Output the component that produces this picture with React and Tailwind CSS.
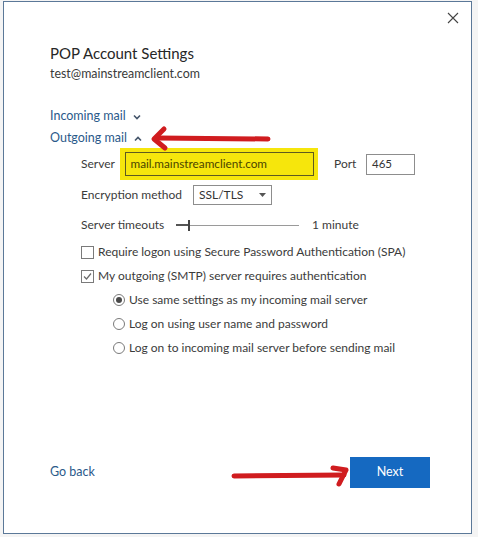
import React from "react";

const font = { fontFamily: 'Lato, "Open Sans", sans-serif' };

function ChevronDown() {
  return (
    <svg width="8" height="6" viewBox="0 0 8 6" className="ml-[7px] mt-[1px]">
      <polyline points="1,1.5 4,4.5 7,1.5" fill="none" stroke="#44546a" strokeWidth="1.6" />
    </svg>
  );
}
function ChevronUp() {
  return (
    <svg width="8" height="6" viewBox="0 0 8 6" className="ml-[7px] mt-[1px]">
      <polyline points="1,4.5 4,1.5 7,4.5" fill="none" stroke="#44546a" strokeWidth="1.6" />
    </svg>
  );
}

function Checkbox({ checked }) {
  return (
    <span className="w-[13px] h-[13px] border border-[#7a7a7a] bg-white flex items-center justify-center shrink-0">
      {checked && (
        <svg width="11" height="11" viewBox="0 0 11 11">
          <polyline points="2,5.5 4.5,8 9,2.5" fill="none" stroke="#6a6a6a" strokeWidth="1.2" />
        </svg>
      )}
    </span>
  );
}

function Radio({ checked }) {
  return (
    <span className="w-[12px] h-[12px] rounded-full border border-[#7a7a7a] bg-white flex items-center justify-center shrink-0">
      {checked && <span className="w-[6px] h-[6px] rounded-full bg-[#4a4a4a]" />}
    </span>
  );
}

export default function App() {
  return (
    <div className="w-[478px] h-[537px] bg-[#f4f4f4] overflow-hidden relative whitespace-nowrap" style={font}>
      <div className="ml-[3px] mt-[1px] w-[469px] h-[533px] border border-[#5b7898] bg-white flex flex-col relative text-[12px] text-[#3b3b3b]">
        {/* close */}
        <div className="flex justify-end pr-[12px] pt-[10px] h-[30px]">
          <svg width="12" height="12" viewBox="0 0 12 12">
            <path d="M1 1 L11 11 M11 1 L1 11" stroke="#444" strokeWidth="1.1" fill="none" />
          </svg>
        </div>

        <div className="pl-[46px] flex flex-col">
          <div className="h-[22px] mt-[10px] flex items-center text-[15px] text-[#262626]">POP Account Settings</div>
          <div className="h-[20px] flex items-center text-[12.4px] text-[#3a3a3a]">test@mainstreamclient.com</div>

          <div className="h-[22px] mt-[21px] flex items-center text-[12.5px] text-[#2b5a8a]">
            Incoming mail
            <ChevronDown />
          </div>
          <div className="h-[19px] mt-[2px] flex items-center text-[12.5px] text-[#2b5a8a]">
            Outgoing mail
            <ChevronUp />
          </div>

          <div className="pl-[31px] flex flex-col">
            {/* server */}
            <div className="h-[32px] flex items-center">
              <span className="w-[39px]">Server</span>
              <div className="w-[198px] h-[32px] bg-[#f6e60c] flex items-center justify-center">
                <div className="w-[189px] h-[24px] border border-[#5e5a20] flex items-center pl-[5px] text-[11.75px] text-[#4a4300]">
                  mail.mainstreamclient.com
                </div>
              </div>
              <span className="ml-[16px] w-[32px]">Port</span>
              <div className="w-[49px] h-[21px] border border-[#8d8d8d] flex items-center pl-[5px] text-[11.5px] text-[#333]">465</div>
            </div>

            {/* encryption */}
            <div className="h-[20px] mt-[5px] flex items-center">
              <span className="w-[112px]">Encryption method</span>
              <div className="w-[79px] h-[20px] border border-[#8d8d8d] flex items-center justify-between pl-[5px] pr-[5px] text-[#333]">
                <span>SSL/TLS</span>
                <svg width="7" height="4" viewBox="0 0 7 4"><polygon points="0,0 7,0 3.5,4" fill="#555" /></svg>
              </div>
            </div>

            {/* timeouts */}
            <div className="h-[20px] mt-[10px] flex items-center">
              <span className="w-[95px]">Server timeouts</span>
              <div className="w-[123px] h-[12px] flex items-center relative">
                <div className="w-[12px] h-[2px] bg-[#555]" />
                <div className="w-[2px] h-[11px] bg-[#444]" />
                <div className="flex-1 h-[1px] bg-[#9a9a9a]" />
              </div>
              <span className="ml-[13px]">1 minute</span>
            </div>

            <div className="h-[24px] mt-[5px] flex items-center">
              <Checkbox />
              <span className="ml-[4px]">Require logon using Secure Password Authentication (SPA)</span>
            </div>
            <div className="h-[24px] flex items-center">
              <Checkbox checked />
              <span className="ml-[4px]">My outgoing (SMTP) server requires authentication</span>
            </div>

            <div className="pl-[32px] flex flex-col">
              <div className="h-[24px] flex items-center">
                <Radio checked />
                <span className="ml-[4px]">Use same settings as my incoming mail server</span>
              </div>
              <div className="h-[24px] flex items-center">
                <Radio />
                <span className="ml-[4px]">Log on using user name and password</span>
              </div>
              <div className="h-[24px] flex items-center">
                <Radio />
                <span className="ml-[4px]">Log on to incoming mail server before sending mail</span>
              </div>
            </div>
          </div>
        </div>

        <div className="flex-1" />

        <div className="flex items-center justify-between pl-[46px] pr-[41px] pb-[45px]">
          <span className="text-[12.5px] text-[#2b5a8a]">Go back</span>
          <div className="w-[80px] h-[31px] bg-[#1569c1] text-white flex items-center justify-center text-[12.5px]">Next</div>
        </div>

        {/* red arrows overlay */}
        <svg className="absolute left-0 top-0 pointer-events-none" width="469" height="533" viewBox="0 0 469 533">
          <g transform="translate(-4,-2)" fill="none" stroke="#d01c1f" strokeLinecap="round" strokeLinejoin="round">
            <path d="M268 139 L158 138" strokeWidth="5" />
            <path d="M164 129 L154 139 L165 148" strokeWidth="5" />
            <path d="M234 476 L344 475" strokeWidth="5" />
            <path d="M333 468 L346 470 L339 484" strokeWidth="5" />
          </g>
        </svg>
      </div>
      <div className="absolute left-0 bottom-0 w-[478px] h-[3px] bg-[#f4f4f4]" />
    </div>
  );
}
